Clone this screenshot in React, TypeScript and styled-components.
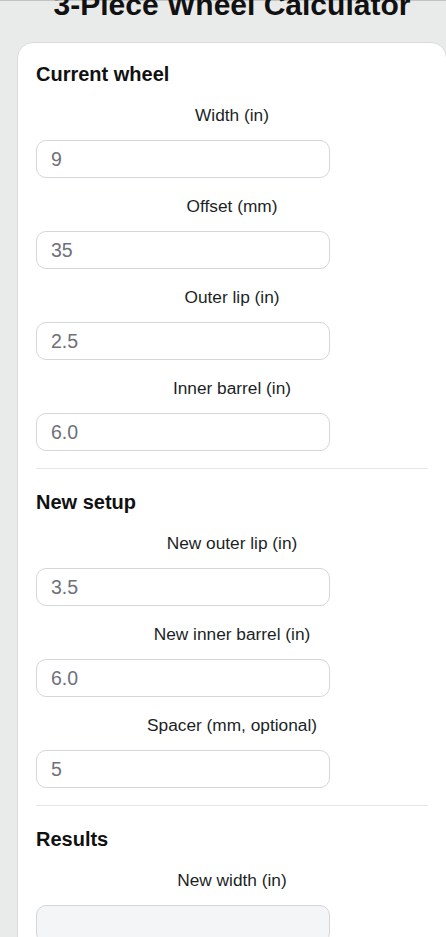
import React from 'react';
import styled, { createGlobalStyle } from 'styled-components';

const GlobalStyle = createGlobalStyle`
  html, body {
    margin: 0;
    padding: 0;
    background: #e9eaea;
    overflow-x: hidden;
  }
  body {
    font-family: "Liberation Sans", Arial, sans-serif;
    color: #1f2328;
  }
`;

const Page = styled.div`
  border-top: 1px solid #c2c4c4;
  padding-left: 17px;
  box-sizing: border-box;
`;

const Wrap = styled.div`
  width: 430px;
`;

const Title = styled.h1`
  margin: -13px 0 20px;
  font-size: 30px;
  line-height: 34px;
  font-weight: 700;
  text-align: center;
  color: #111;
`;

const Card = styled.div`
  background: #fff;
  border: 1px solid #dadcdc;
  border-radius: 16px;
  padding: 20px 18px 24px;
`;

const Section = styled.section<{ $first?: boolean }>`
  padding: ${(p) => (p.$first ? '0 0 17px' : '22px 0 17px')};
  border-top: ${(p) => (p.$first ? 'none' : '1px solid #e4e6e8')};
`;

const Heading = styled.h2`
  margin: 0 0 19px;
  font-size: 20px;
  line-height: 23px;
  font-weight: 700;
  color: #111;
`;

const Field = styled.div`
  margin-bottom: 18px;

  &:last-child {
    margin-bottom: 0;
  }
`;

const Label = styled.label`
  display: block;
  text-align: center;
  font-size: 17.3px;
  line-height: 20px;
  color: #1c1f26;
  margin-bottom: 15px;
`;

const Input = styled.input<{ $muted?: boolean }>`
  display: block;
  width: 75%;
  height: 38px;
  box-sizing: border-box;
  padding: 0 14px;
  border: 1px solid #d3d6da;
  border-radius: 10px;
  background: ${(p) => (p.$muted ? '#f4f5f7' : '#fff')};
  font-family: "Liberation Sans", Arial, sans-serif;
  font-size: 19.5px;
  color: #6e7179;
  outline: none;
`;

type FieldDef = { label: string; value: string };

const current: FieldDef[] = [
  { label: 'Width (in)', value: '9' },
  { label: 'Offset (mm)', value: '35' },
  { label: 'Outer lip (in)', value: '2.5' },
  { label: 'Inner barrel (in)', value: '6.0' },
];

const setup: FieldDef[] = [
  { label: 'New outer lip (in)', value: '3.5' },
  { label: 'New inner barrel (in)', value: '6.0' },
  { label: 'Spacer (mm, optional)', value: '5' },
];

const results: FieldDef[] = [{ label: 'New width (in)', value: '' }];

const FieldList: React.FC<{ items: FieldDef[]; muted?: boolean }> = ({ items, muted }) => (
  <>
    {items.map((f) => (
      <Field key={f.label}>
        <Label>{f.label}</Label>
        <Input defaultValue={f.value} readOnly={muted} $muted={muted} />
      </Field>
    ))}
  </>
);

const App: React.FC = () => {
  return (
    <Page>
      <GlobalStyle />
      <Wrap>
        <Title>3-Piece Wheel Calculator</Title>
        <Card>
          <Section $first>
            <Heading>Current wheel</Heading>
            <FieldList items={current} />
          </Section>
          <Section>
            <Heading>New setup</Heading>
            <FieldList items={setup} />
          </Section>
          <Section>
            <Heading>Results</Heading>
            <FieldList items={results} muted />
          </Section>
        </Card>
      </Wrap>
    </Page>
  );
};

export default App;
